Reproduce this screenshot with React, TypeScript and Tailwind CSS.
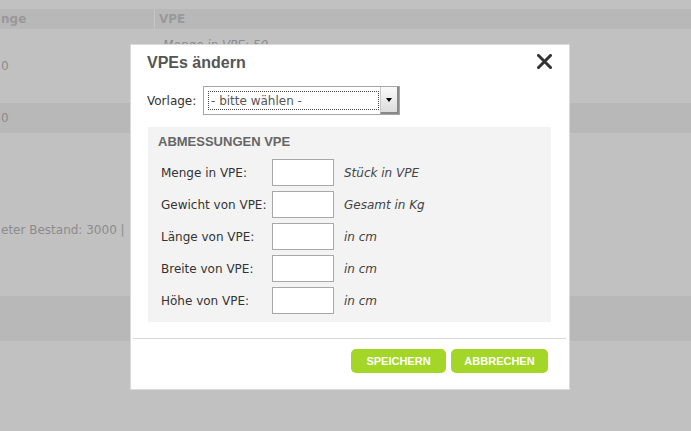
const body = "font-['DejaVu_Sans',Verdana,sans-serif]";
const arial = "font-['Liberation_Sans',Arial,sans-serif]";

const rows = [
  { label: 'Menge in VPE:', hint: 'Stück in VPE' },
  { label: 'Gewicht von VPE:', hint: 'Gesamt in Kg' },
  { label: 'Länge von VPE:', hint: 'in cm' },
  { label: 'Breite von VPE:', hint: 'in cm' },
  { label: 'Höhe von VPE:', hint: 'in cm' },
];

function Background() {
  return (
    <div className={`flex flex-col text-[12px] text-[#8c8c8c] ${body}`}>
      <div className="h-[9px]" />
      <div className="flex h-[20px] items-center bg-[#b8b8b8] font-bold text-[#999]">
        <div className="flex h-full w-[155px] items-center border-r border-[#c6c6c6] pl-px">nge</div>
        <div className="pl-[4px]">VPE</div>
      </div>
      <div className="flex h-[74px]">
        <div className="flex w-[155px] items-center pl-px">0</div>
        <div className="pl-[8px] pt-[7px] italic">Menge in VPE: 50</div>
      </div>
      <div className="flex h-[30px] items-center bg-[#b8b8b8] pl-px">0</div>
      <div className="flex h-[163px] flex-col">
        <div className="mt-[88px] whitespace-nowrap pl-px">eter Bestand: 3000 |</div>
      </div>
      <div className="h-[45px] bg-[#b8b8b8]" />
    </div>
  );
}

function CloseIcon() {
  return (
    <svg width="15" height="15" viewBox="0 0 15 15" className="block">
      <path d="M1.5 1.5 L13.5 13.5 M13.5 1.5 L1.5 13.5" stroke="#333" strokeWidth="3" strokeLinecap="square" />
    </svg>
  );
}

function Select() {
  return (
    <div className="flex h-[29px] w-[197px] border border-[#a6a6a6] bg-white">
      <div className="flex-1 py-[4px] pl-[4px] pr-[1px]">
        <div className="flex h-full items-center border border-dotted border-[#444] pl-[2px] text-[12px] text-[#555]">
          - bitte wählen -
        </div>
      </div>
      <div className="flex w-[19px] items-center justify-center border-b-2 border-l border-r-2 border-b-[#888] border-l-[#c8c8c8] border-r-[#888] bg-gradient-to-b from-[#fafafa] to-[#dcdcdc]">
        <div className="h-0 w-0 border-x-[3px] border-t-[4px] border-x-transparent border-t-black" />
      </div>
    </div>
  );
}

function Modal() {
  return (
    <div className={`absolute left-[130px] top-[44px] flex h-[346px] w-[440px] flex-col border border-[#d9d9d9] bg-white ${body}`}>
      <div className="flex items-start justify-between pl-[16px] pr-[17px] pt-[9px]">
        <h2 className={`text-[16px] font-bold leading-[18px] text-[#555] ${arial}`}>VPEs ändern</h2>
        <CloseIcon />
      </div>
      <div className="mt-[14px] flex items-center gap-[6px] pl-[16px] text-[12px] text-[#333]">
        <span className="w-[50px]">Vorlage:</span>
        <Select />
      </div>
      <div className="ml-[17px] mt-[12px] w-[403px] bg-[#f3f3f3] pb-[8px] pt-[7px]">
        <h3 className={`pl-[10px] text-[13px] font-bold leading-[16px] text-[#666] ${arial}`}>ABMESSUNGEN VPE</h3>
        <div className="mt-[9px] flex flex-col gap-[5px]">
          {rows.map((r) => (
            <div key={r.label} className="flex h-[27px] items-center text-[12px] text-[#333]">
              <span className="box-content w-[111px] pl-[13px]">{r.label}</span>
              <div className="h-[27px] w-[62px] border border-[#a8a8a8] bg-white" />
              <span className="ml-[10px] italic text-[#444]">{r.hint}</span>
            </div>
          ))}
        </div>
      </div>
      <div className="ml-[2px] mr-[3px] mt-[16px] h-px bg-[#d8d8d8]" />
      <div className={`mt-[10px] flex justify-end gap-[5px] pr-[21px] text-[11px] font-bold text-white ${arial}`}>
        <button className="h-[24px] w-[95px] rounded-[5px] bg-[#a3d626]">SPEICHERN</button>
        <button className="h-[24px] w-[97px] rounded-[5px] bg-[#a3d626]">ABBRECHEN</button>
      </div>
    </div>
  );
}

export default function App() {
  return (
    <div className="relative h-[431px] w-[691px] overflow-hidden bg-[#c1c1c1]">
      <Background />
      <Modal />
    </div>
  );
}
